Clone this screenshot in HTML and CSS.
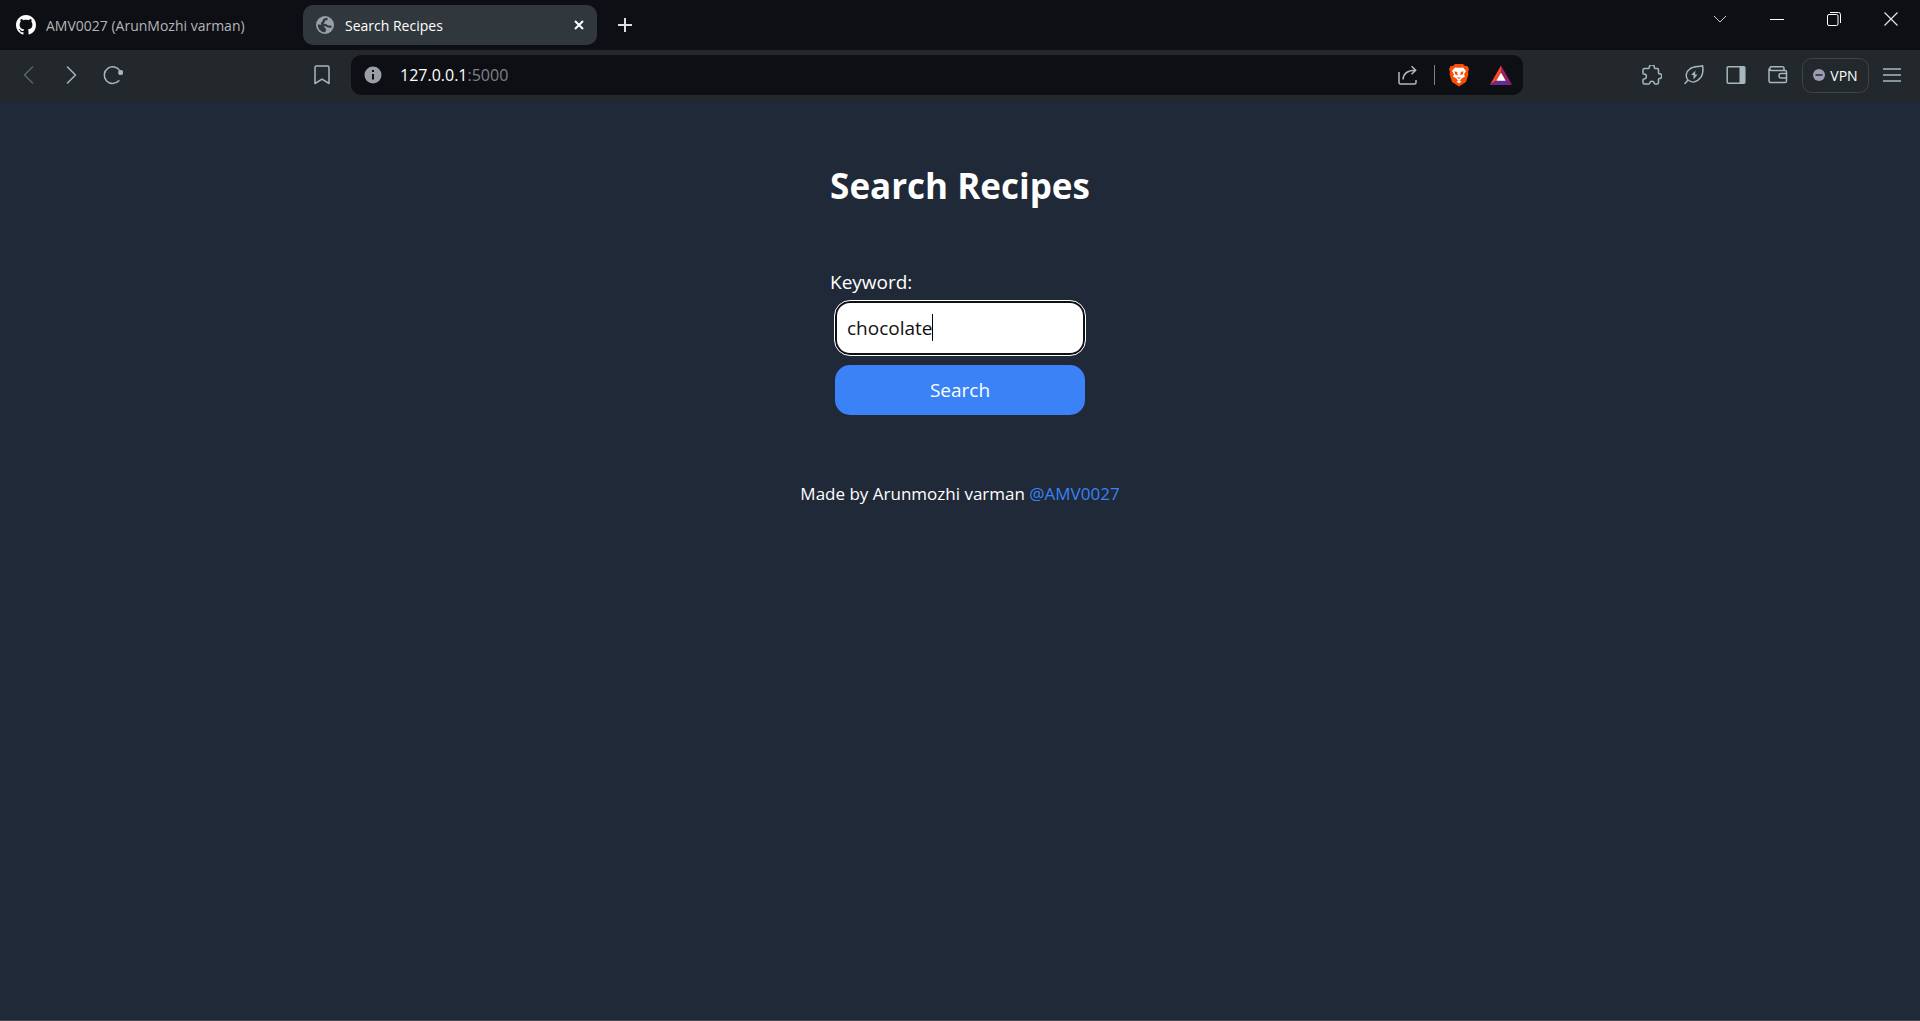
FILE: index.html
```html
<!DOCTYPE html>
<html lang="en">
<head>
<meta charset="utf-8">
<meta name="viewport" content="width=device-width, initial-scale=1">
<title>Search Recipes</title>
<link rel="stylesheet" href="styles.css">
</head>
<body>
<header class="browser">
  <div class="tabstrip">
    <div class="tab">
      <svg class="icon-20" viewBox="0 0 16 16" fill="#fff" aria-hidden="true"><path d="M8 0C3.58 0 0 3.58 0 8c0 3.54 2.29 6.53 5.47 7.59.4.07.55-.17.55-.38 0-.19-.01-.82-.01-1.49-2.01.37-2.53-.49-2.69-.94-.09-.23-.48-.94-.82-1.13-.28-.15-.68-.52-.01-.53.63-.01 1.08.58 1.23.82.72 1.21 1.87.87 2.33.66.07-.52.28-.87.51-1.07-1.78-.2-3.64-.89-3.64-3.95 0-.87.31-1.59.82-2.15-.08-.2-.36-1.02.08-2.12 0 0 .67-.21 2.2.82.64-.18 1.32-.27 2-.27s1.36.09 2 .27c1.53-1.04 2.2-.82 2.2-.82.44 1.1.16 1.92.08 2.12.51.56.82 1.27.82 2.15 0 3.07-1.87 3.75-3.65 3.95.29.25.54.73.54 1.48 0 1.07-.01 1.93-.01 2.2 0 .21.15.46.55.38A8.01 8.01 0 0 0 16 8c0-4.42-3.58-8-8-8z"/></svg>
      <span class="tab-title">AMV0027 (ArunMozhi varman)</span>
    </div>
    <div class="tab tab-active">
      <svg class="icon-20" viewBox="0 0 20 20" aria-hidden="true"><circle cx="10" cy="10" r="9" fill="#9aa0a8"/><path d="M12.500 4.200C9.500 3.800 8.500 5 8.800 6.300 8.500 7.500 7 7.500 7 8.800c.8 1.400 3.800.6 4.700 2 .6 1 2.300.8 4.800.7" fill="none" stroke="#30383e" stroke-width="2.200"/><path d="M2.800 9.500c3.500-.2 6.200.4 6.700 2.800.2 1.200 1.500 1 1.600 2.200.1 1-.6 1.800-.9 2.800C6 17.300 2.700 14 2.800 9.500z" fill="#30383e"/></svg>
      <span class="tab-title">Search Recipes</span>
      <button class="ghost tab-close" type="button" aria-label="Close tab"><svg class="icon-10" viewBox="0 0 10 10" stroke="#fff" stroke-width="2" aria-hidden="true"><path d="M1 1l8 8M9 1L1 9"/></svg></button>
    </div>
    <button class="ghost new-tab" type="button" aria-label="New tab"><svg class="icon-14" viewBox="0 0 14 14" stroke="#dcdddf" stroke-width="2" aria-hidden="true"><path d="M7 0v14M0 7h14"/></svg></button>
    <div class="window-controls">
      <button class="ghost" type="button" aria-label="Search tabs"><svg class="icon-14" viewBox="0 0 14 14" fill="none" stroke="#c9cacc" aria-hidden="true"><path d="M1 4l6 6 6-6"/></svg></button>
      <button class="ghost" type="button" aria-label="Minimize"><svg class="icon-14" viewBox="0 0 14 14" stroke="#fff" aria-hidden="true"><path d="M0 7.500h14"/></svg></button>
      <button class="ghost" type="button" aria-label="Restore"><svg class="icon-14" viewBox="0 0 14 14" fill="none" stroke="#fff" aria-hidden="true"><rect x=".5" y="2.500" width="10.500" height="11" rx="1.500"/><path d="M3 .5h8.500a2 2 0 0 1 2 2V11"/></svg></button>
      <button class="ghost" type="button" aria-label="Close"><svg class="icon-14" viewBox="0 0 14 14" stroke="#e4e4e5" stroke-width="1.200" aria-hidden="true"><path d="M.5.5l13 13M13.500.5l-13 13"/></svg></button>
    </div>
  </div>
  <div class="toolbar">
    <div class="nav">
      <button class="ghost" type="button" aria-label="Back" disabled><svg class="icon-20" viewBox="0 0 20 20" fill="none" stroke="#5b6468" stroke-width="1.500" stroke-linecap="round" stroke-linejoin="round" aria-hidden="true"><path d="M13.500 2l-8 8 8 8"/></svg></button>
      <button class="ghost" type="button" aria-label="Forward"><svg class="icon-20" viewBox="0 0 20 20" fill="none" stroke="#a5b8c0" stroke-width="1.500" stroke-linecap="round" stroke-linejoin="round" aria-hidden="true"><path d="M6.500 2l8 8-8 8"/></svg></button>
      <button class="ghost" type="button" aria-label="Reload"><svg class="icon-20" viewBox="0 0 20 20" fill="none" stroke="#a5b8c0" stroke-width="1.500" stroke-linecap="round" aria-hidden="true"><path d="M17 6a8.400 8.400 0 1 0-1.100 9.800"/><circle cx="17.700" cy="7.500" r="1.800" fill="#a5b8c0"/></svg></button>
    </div>
    <button class="ghost bookmark" type="button" aria-label="Bookmark this page"><svg class="icon-20" viewBox="0 0 20 20" fill="none" stroke="#a5b8c0" stroke-width="1.500" stroke-linejoin="round" aria-hidden="true"><path d="M4.500 1h11a1.500 1.500 0 0 1 1.500 1.500V18.500l-7-4.300-7 4.300V2.500A1.500 1.500 0 0 1 4.500 1z"/></svg></button>
    <div class="address">
      <button class="ghost" type="button" aria-label="Site information"><svg class="icon-18" viewBox="0 0 18 18" aria-hidden="true"><circle cx="9" cy="9" r="8.500" fill="#9a9ea6"/><path d="M9 4v2M9 8v5.500" stroke="#0d0f14" stroke-width="2"/></svg></button>
      <div class="url" role="textbox" aria-label="Address">127.0.0.1<span class="port">:5000</span></div>
      <button class="ghost share" type="button" aria-label="Share"><svg class="icon-20" viewBox="0 0 20 20" fill="none" stroke="#b6b7b9" stroke-width="1.500" stroke-linejoin="round" aria-hidden="true"><path d="M1 7v10.500A1.500 1.500 0 0 0 2.500 19h14a1.500 1.500 0 0 0 1.500-1.500V15M5 14.500c.3-6 4-9.300 12.500-9.300M13.500 1.200l4.300 4-4.300 4"/></svg></button>
      <span class="divider"></span>
      <button class="ghost shield" type="button" aria-label="Brave Shields"><svg class="icon-24" viewBox="0 0 24 24" aria-hidden="true"><path d="M8 1h8l2 2h2.500L22 6l-1 3 .5 2-2.500 8-7 4.500L5 19 2.500 11 3 9 2 6l1.500-3H6z" fill="#fb4d03"/><path d="M12 4.800L8 4.500 5 8l2 3.500L6 13.500l3.500 2 1 1.500L12 18l1.500-1 1-1.500 3.500-2-1-2L19 8l-3-3.500zM9.500 18.500L12 20.500l2.500-2-2.500-1z" fill="#fff"/><path d="M7.500 8.300l2.700.7.500 3.500-2.500-1.300zM16.500 8.300l-2.700.7-.5 3.500 2.500-1.300zM10 14.500h4l-2 1.500z" fill="#fb4d03"/></svg></button>
      <button class="ghost" type="button" aria-label="Brave Rewards"><svg class="icon-24" viewBox="0 0 24 24" aria-hidden="true"><path d="M12 2.500L.8 22 8 17l4-8z" fill="#ff4724"/><path d="M12 2.500L23.200 22 16 17l-4-8z" fill="#9e1f63"/><path d="M.8 22h22.400L16 17H8z" fill="#662d91"/><path d="M12 9.500L7.300 17.800h9.400z" fill="#fff"/></svg></button>
    </div>
    <div class="actions">
      <button class="ghost" type="button" aria-label="Extensions"><svg class="icon-20" viewBox="0 0 20 20" fill="none" stroke="#a5b8c0" stroke-width="1.500" stroke-linejoin="round" aria-hidden="true"><path d="M2.500 3.500h4c.8 0 .8-.6.8-1.200a2.500 2.500 0 0 1 5 0c0 .6 0 1.200.8 1.200H15a1.500 1.500 0 0 1 1.500 1.500v3c0 .8.500.8 1 .8a2.200 2.200 0 0 1 0 4.600c-.5 0-1 0-1 .8V17.500a1.500 1.500 0 0 1-1.500 1.500h-2c-.8 0-.7-.5-.8-1a2.300 2.300 0 0 0-4.500 0c0 .5-.2 1-.9 1H2.500A1.500 1.500 0 0 1 1 17.500v-2.800c0-.7.600-.8 1-.8a2.400 2.400 0 0 0 0-4.800c-.5 0-1-.2-1-.9V5a1.500 1.500 0 0 1 1.500-1.500z"/></svg></button>
      <button class="ghost" type="button" aria-label="Energy saver"><svg class="icon-20" viewBox="0 0 20 20" fill="none" stroke="#a5b8c0" stroke-width="1.500" stroke-linecap="round" stroke-linejoin="round" aria-hidden="true"><path d="M1 18.500l3-3.500M4 15C1 11.500 2 6.500 6 3.800 9.500 1.200 14 2 18.600.8c.8 5 .4 9.200-2.600 12.500C13 17 8.500 18.500 4 15z"/><path d="M11.500 5.500L7 10h2.500v4.500l4-5H11z" fill="#a5b8c0" stroke="none"/></svg></button>
      <button class="ghost" type="button" aria-label="Sidebar"><svg class="icon-20" viewBox="0 0 20 20" aria-hidden="true"><rect x="1.200" y="1.700" width="17.600" height="16.600" rx="1" fill="none" stroke="#a5b8c0" stroke-width="1.500"/><path d="M13.500 2h5v16h-5z" fill="#a5b8c0"/></svg></button>
      <button class="ghost" type="button" aria-label="Wallet"><svg class="icon-20" viewBox="0 0 20 20" fill="none" stroke="#a5b8c0" stroke-width="1.500" stroke-linejoin="round" aria-hidden="true"><path d="M1 3.500v12A1.800 1.800 0 0 0 2.800 17.500H17A1.500 1.500 0 0 0 18.500 16V7A1.500 1.500 0 0 0 17 5.500H3A2 2 0 0 1 3 1.800h11.500a1.500 1.500 0 0 1 1.500 1.500v2M18.500 8.500H13a2 2 0 0 0-2 2v.5a2 2 0 0 0 2 2h5.500z"/></svg></button>
      <button class="vpn" type="button"><svg class="icon-12" viewBox="0 0 12 12" aria-hidden="true"><circle cx="6" cy="6" r="6" fill="#9d9bb2"/><path d="M2.500 6h7" stroke="#22282b" stroke-width="1.500"/></svg>VPN</button>
      <button class="ghost" type="button" aria-label="Menu"><svg class="icon-18" viewBox="0 0 18 18" stroke="#a5b8c0" stroke-width="1.500" aria-hidden="true"><path d="M0 3h18M0 9h18M0 15h18"/></svg></button>
    </div>
  </div>
</header>
<main class="page">
  <h1 class="heading">Search Recipes</h1>
  <form class="search">
    <label class="label" for="keyword">Keyword:</label>
    <div class="field">
      <input class="keyword" id="keyword" type="text" value="chocolate">
      <span class="caret"></span>
    </div>
    <button class="submit" type="submit">Search</button>
  </form>
  <p class="credit">Made by Arunmozhi varman <a class="credit-link" href="#">@AMV0027</a></p>
</main>
</body>
</html>
```

FILE: styles.css
```css
* {
  box-sizing: border-box;
}

body {
  margin: 0;
  min-height: 100vh;
  display: flex;
  flex-direction: column;
  background: #1f2937;
  border-bottom: 1px solid #44474b;
  color: #fff;
  font-family: "Open Sans", "Noto Sans", sans-serif;
}

button,
input {
  font: inherit;
  color: inherit;
}

svg {
  display: block;
}

.icon-10 { width: 10px; height: 10px; }
.icon-12 { width: 12px; height: 12px; }
.icon-14 { width: 14px; height: 14px; }
.icon-18 { width: 18px; height: 18px; }
.icon-20 { width: 20px; height: 20px; }
.icon-24 { width: 24px; height: 24px; }

.ghost {
  display: grid;
  place-items: center;
  flex: none;
  padding: 0;
  border: 0;
  background: none;
}

.tabstrip {
  display: flex;
  align-items: center;
  height: 50px;
  background: #0d0f14;
}

.tab {
  display: flex;
  align-items: center;
  gap: 10px;
  width: 294px;
  height: 40px;
  padding: 0 13px 0 12px;
  margin-left: 4px;
  border-radius: 10px;
  color: #b4b5b7;
  font-size: 14px;
}

.tab-active {
  background: #30383e;
  color: #fff;
}

.tab + .tab {
  margin-left: 5px;
}

.tab-title {
  flex: 1;
  white-space: nowrap;
}

.new-tab {
  width: 56px;
  height: 50px;
}

.window-controls {
  display: flex;
  align-self: flex-start;
  margin-left: auto;
  padding-right: 1px;
}

.window-controls .ghost {
  width: 57px;
  height: 37px;
}

.toolbar {
  display: flex;
  align-items: center;
  height: 51px;
  padding-bottom: 1px;
  background: #22282b;
}

.nav {
  display: flex;
  gap: 22px;
  width: 312px;
  padding-left: 19px;
}

.address {
  display: flex;
  align-items: center;
  flex: 1;
  height: 40px;
  margin-left: 19px;
  padding: 0 10px 0 13px;
  border-radius: 10px;
  background: #0d0f14;
}

.url {
  flex: 1;
  margin-left: 18px;
  font-size: 16px;
}

.port {
  color: #808286;
}

.divider {
  width: 1px;
  height: 20px;
  margin: 0 12px 0 16px;
  background: #7d8083;
}

.shield {
  margin-right: 18px;
}

.actions {
  display: flex;
  align-items: center;
  justify-content: flex-end;
  gap: 22px;
  width: 397px;
  padding-right: 19px;
}

.vpn {
  display: flex;
  align-items: center;
  justify-content: center;
  gap: 5px;
  width: 67px;
  height: 35px;
  margin: 0 -8px;
  padding: 0;
  border: 1px solid #3c4648;
  border-radius: 10px;
  background: none;
  font-size: 14px;
}

.page {
  display: flex;
  flex-direction: column;
  align-items: center;
  padding-top: 60px;
}

.heading {
  margin: 0;
  font-size: 35px;
  line-height: 50px;
  font-weight: 700;
}

.search {
  display: flex;
  flex-direction: column;
  width: 260px;
  margin-top: 56px;
}

.label {
  font-size: 19px;
  line-height: 30px;
}

.field {
  position: relative;
  margin: 4px 5px 0;
}

.keyword {
  display: block;
  width: 100%;
  height: 54px;
  padding: 0 10px;
  border: 2px solid #101010;
  border-radius: 15px;
  outline: 1px solid #fff;
  background: #fff;
  color: #111;
  font-size: 19px;
}

.caret {
  position: absolute;
  top: 13px;
  left: 97px;
  width: 1px;
  height: 27px;
  background: #000;
}

.submit {
  height: 50px;
  margin: 10px 5px 0;
  border: 0;
  border-radius: 15px;
  background: #3b82f6;
  font-size: 19px;
}

.credit {
  margin: 64px 0 0;
  font-size: 17px;
  line-height: 30px;
}

.credit-link {
  color: #3b82f6;
  text-decoration: none;
}
```
